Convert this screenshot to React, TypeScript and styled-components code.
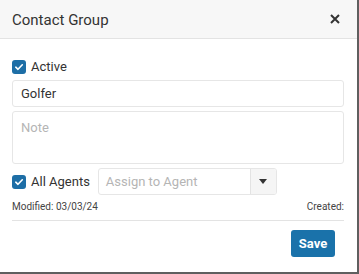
import React from 'react';
import styled, {createGlobalStyle} from 'styled-components';

const GlobalStyle = createGlobalStyle`
  html, body {
    margin: 0;
    padding: 0;
    background: #5f5f5f;
    font-family: Roboto, "Liberation Sans", Arial, sans-serif;
  }
`

const Modal = styled.div`
  width: 357px;
  height: 272px;
  background: #fff;
  display: flex;
  flex-direction: column;
`

const Header = styled.div`
  height: 39px;
  background: #f7f7f7;
  border-bottom: 1px solid #e3e3e3;
  display: flex;
  align-items: center;
  justify-content: space-between;
  padding: 0 16px 0 12px;
  box-sizing: border-box;
  flex-shrink: 0;
`

const Title = styled.span`
  font-size: 15px;
  color: #333;
  padding-top: 1px;
`

const CloseButton = styled.button`
  border: none;
  background: none;
  padding: 0;
  width: 12px;
  height: 12px;
  display: flex;
  cursor: pointer;
`

const Body = styled.div`
  padding: 20px 13px 0 12px;
  display: flex;
  flex-direction: column;
`

const CheckLabel = styled.label`
  display: flex;
  align-items: center;
  gap: 5px;
  font-size: 13px;
  color: #333;
  white-space: nowrap;
`

const Box = styled.span`
  width: 14px;
  height: 14px;
  border-radius: 3px;
  background: #1d6ea6;
  display: flex;
  align-items: center;
  justify-content: center;
  flex-shrink: 0;
`

const TextInput = styled.input`
  height: 27px;
  margin-top: 6px;
  border: 1px solid #e6e6e6;
  border-radius: 3px;
  padding: 0 8px;
  font-family: inherit;
  font-size: 13px;
  color: #333;
  box-sizing: border-box;
  outline: none;
`

const NoteArea = styled.textarea`
  height: 53px;
  margin-top: 4px;
  border: 1px solid #e6e6e6;
  border-radius: 3px;
  padding: 8px 8px;
  font-family: inherit;
  font-size: 13px;
  color: #333;
  box-sizing: border-box;
  resize: none;
  outline: none;

  &::placeholder {
    color: #b5b5b5;
  }
`

const AgentRow = styled.div`
  display: flex;
  align-items: center;
  gap: 8px;
  margin-top: 4px;
`

const Select = styled.div`
  width: 179px;
  height: 27px;
  border: 1px solid #e6e6e6;
  border-radius: 3px;
  display: flex;
  box-sizing: border-box;
  overflow: hidden;
`

const SelectText = styled.span`
  flex: 1;
  display: flex;
  align-items: center;
  padding-left: 7px;
  font-size: 13px;
  color: #b5b5b5;
`

const Caret = styled.span`
  width: 25px;
  background: #f5f5f5;
  border-left: 1px solid #e3e3e3;
  display: flex;
  align-items: center;
  justify-content: center;
`

const Meta = styled.div`
  display: flex;
  justify-content: space-between;
  font-size: 10px;
  color: #444;
  margin-top: 6px;
  padding-bottom: 8px;
  border-bottom: 1px solid #e3e3e3;
`

const Footer = styled.div`
  display: flex;
  justify-content: flex-end;
  padding: 9px 9px 0 0;
`

const SaveButton = styled.button`
  width: 44px;
  height: 27px;
  background: #1a72aa;
  color: #fff;
  border: none;
  border-radius: 3px;
  font-family: inherit;
  font-weight: bold;
  font-size: 13px;
  padding: 0;
`

const Check = () => (
    <Box>
        <svg width="10" height="10" viewBox="0 0 10 10">
            <path d="M1.8 5.2 L4 7.3 L8.3 2.8" stroke="#fff" strokeWidth="1.6" fill="none"
                  strokeLinecap="round" strokeLinejoin="round"/>
        </svg>
    </Box>
)

export default function App() {
    return (
        <>
            <GlobalStyle/>
            <Modal>
                <Header>
                    <Title>Contact Group</Title>
                    <CloseButton>
                        <svg width="12" height="12" viewBox="0 0 12 12">
                            <path d="M2 2 L10 10 M10 2 L2 10" stroke="#333" strokeWidth="2"/>
                        </svg>
                    </CloseButton>
                </Header>
                <Body>
                    <CheckLabel><Check/>Active</CheckLabel>
                    <TextInput defaultValue="Golfer"/>
                    <NoteArea placeholder="Note"/>
                    <AgentRow>
                        <CheckLabel><Check/>All Agents</CheckLabel>
                        <Select>
                            <SelectText>Assign to Agent</SelectText>
                            <Caret>
                                <svg width="8" height="5" viewBox="0 0 8 5">
                                    <path d="M0 0 H8 L4 5 Z" fill="#333"/>
                                </svg>
                            </Caret>
                        </Select>
                    </AgentRow>
                    <Meta>
                        <span>Modified: 03/03/24</span>
                        <span>Created:</span>
                    </Meta>
                    <Footer>
                        <SaveButton>Save</SaveButton>
                    </Footer>
                </Body>
            </Modal>
        </>
    );
}
